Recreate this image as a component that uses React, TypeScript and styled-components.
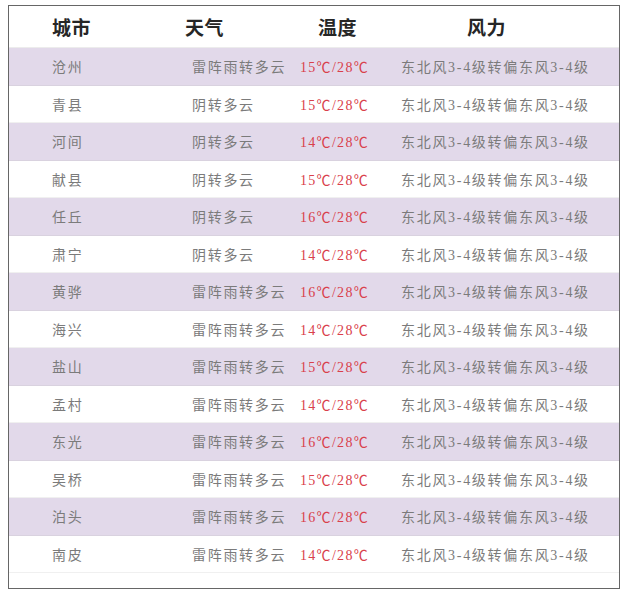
import React from 'react'
import styled, { createGlobalStyle } from 'styled-components'

const rows = [
  ['沧州', '雷阵雨转多云', '15℃/28℃'],
  ['青县', '阴转多云', '15℃/28℃'],
  ['河间', '阴转多云', '14℃/28℃'],
  ['献县', '阴转多云', '15℃/28℃'],
  ['任丘', '阴转多云', '16℃/28℃'],
  ['肃宁', '阴转多云', '14℃/28℃'],
  ['黄骅', '雷阵雨转多云', '16℃/28℃'],
  ['海兴', '雷阵雨转多云', '14℃/28℃'],
  ['盐山', '雷阵雨转多云', '15℃/28℃'],
  ['孟村', '雷阵雨转多云', '14℃/28℃'],
  ['东光', '雷阵雨转多云', '16℃/28℃'],
  ['吴桥', '雷阵雨转多云', '15℃/28℃'],
  ['泊头', '雷阵雨转多云', '16℃/28℃'],
  ['南皮', '雷阵雨转多云', '14℃/28℃'],
]

const WIND = '东北风3-4级转偏东风3-4级'

export default function App () {
  return (
    <>
      <GlobalStyle />
      <Table>
        <HeaderRow>
          <HeadCell $pad={43}>城市</HeadCell>
          <HeadCell $pad={5}>天气</HeadCell>
          <HeadCell $pad={22}>温度</HeadCell>
          <HeadCell $pad={71}>风力</HeadCell>
        </HeaderRow>
        {rows.map(([city, weather, temp], index) => (
          <Row key={city} $striped={index % 2 === 0}>
            <Cell $pad={43}>{city}</Cell>
            <Cell $pad={12}>{weather}</Cell>
            <TempCell $pad={4}>{temp}</TempCell>
            <Cell $pad={5}>{WIND}</Cell>
          </Row>
        ))}
      </Table>
    </>
  )
}

const GlobalStyle = createGlobalStyle`
  body {
    margin: 0;
    background: #ffffff;
  }
`

const Table = styled.div`
  box-sizing: border-box;
  width: 612px;
  margin: 5px 0 0 8px;
  padding-bottom: 15px;
  border: 1px solid #666666;
  background: #ffffff;
  font-family: 'Liberation Serif', 'Noto Sans CJK SC', serif;
`

const HeaderRow = styled.div`
  display: grid;
  grid-template-columns: 171px 116px 100px 1fr;
  align-items: center;
  height: 41px;
  border-bottom: 1px solid #ececec;
`

const HeadCell = styled.div<{ $pad: number }>`
  padding-left: ${p => p.$pad}px;
  font-family: 'Noto Sans CJK SC', sans-serif;
  font-size: 19px;
  font-weight: 700;
  color: #262626;
  letter-spacing: 0.5px;
`

const Row = styled.div<{ $striped: boolean }>`
  display: grid;
  grid-template-columns: 171px 116px 100px 1fr;
  align-items: center;
  height: 37.5px;
  box-sizing: border-box;
  background: ${p => (p.$striped ? '#e2d9ea' : '#ffffff')};
  border-bottom: 1px solid ${p => (p.$striped ? '#d9d2df' : '#f0f0f0')};
`

const Cell = styled.div<{ $pad: number }>`
  padding-left: ${p => p.$pad}px;
  font-size: 14px;
  letter-spacing: 1.7px;
  color: #7b7b7b;
  white-space: nowrap;
`

const TempCell = styled(Cell)`
  color: #d9404b;
  letter-spacing: 1.3px;
`
